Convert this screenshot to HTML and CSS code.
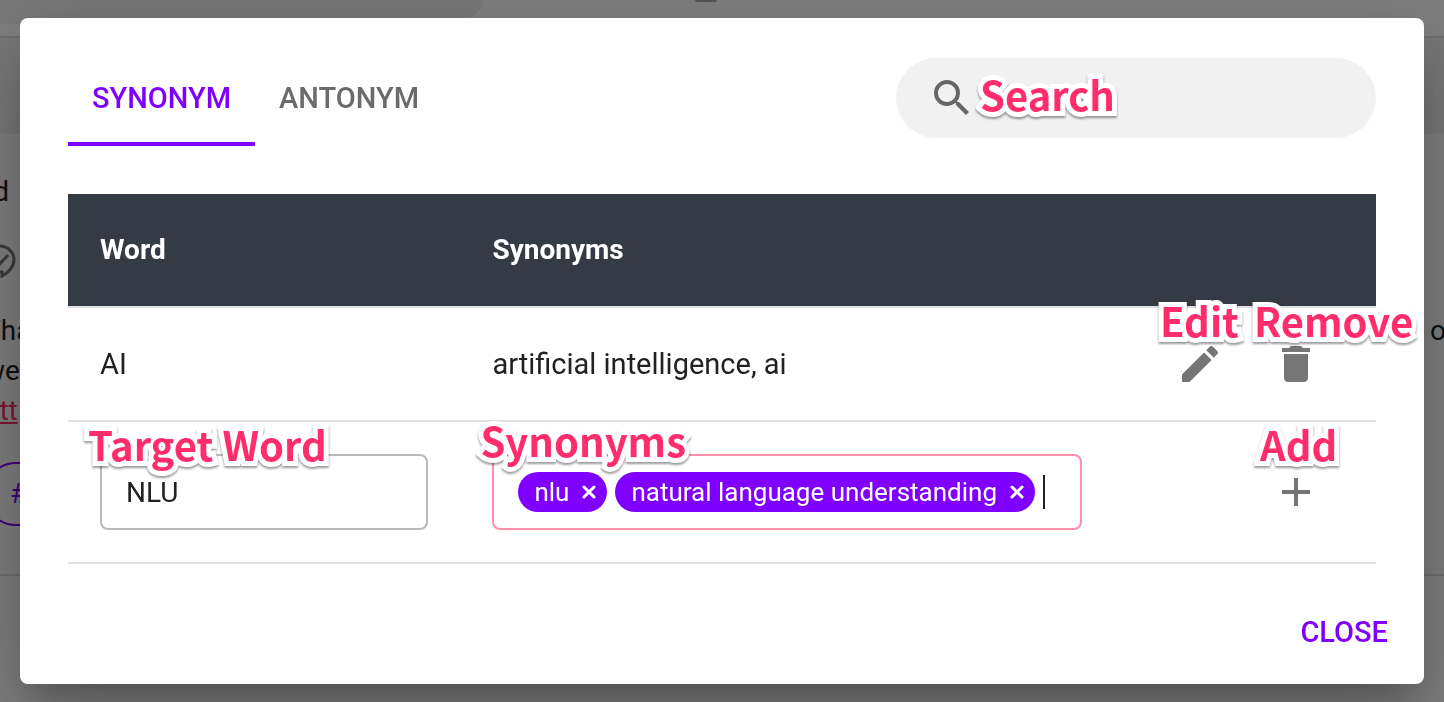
FILE: index.html
```
<!DOCTYPE html>
<html lang="en">
<head>
    <meta charset="UTF-8">
    <meta name="viewport" content="width=device-width, initial-scale=1.0">
    <title>Synonyms</title>
    <link rel="stylesheet" href="styles.css">
</head>
<body>
    <!-- Page behind the dialog -->
    <div class="page" aria-hidden="true">
        <div class="toolbar">
            <div class="toolbar-search"></div>
            <div class="toolbar-icon"></div>
        </div>
        <div class="page-band"></div>
        <div class="page-row">
            <div class="page-title">rd</div>
            <svg class="page-icon" viewBox="0 0 32 34" fill="none" stroke="#777" stroke-width="3">
                <path d="M16 2a14 14 0 0 1 14 14c0 7-6 13-12 16v-4h-2A13 13 0 0 1 16 2z"/>
                <path d="M9 17l5 5 10-11"/>
            </svg>
            <div class="page-text">
                <div>Tha</div>
                <div>o</div>
            </div>
            <div>we</div>
            <a class="page-link" href="#">htt</a>
            <div class="page-chip">#</div>
        </div>
    </div>

    <div class="backdrop">
        <div class="dialog" role="dialog" aria-label="Synonyms">
            <div class="dialog-header">
                <div class="tabs" role="tablist">
                    <button class="tab active" role="tab" aria-selected="true">SYNONYM</button>
                    <button class="tab" role="tab" aria-selected="false">ANTONYM</button>
                </div>
                <div class="search">
                    <svg class="icon search-icon" viewBox="0 0 24 24"><path d="M15.5 14h-.79l-.28-.27A6.47 6.47 0 0 0 16 9.5 6.5 6.5 0 1 0 9.5 16c1.61 0 3.09-.59 4.23-1.57l.27.28v.79l5 4.99L20.49 19l-4.99-5zm-6 0C7.01 14 5 11.99 5 9.5S7.01 5 9.5 5 14 7.01 14 9.5 11.99 14 9.5 14z"/></svg>
                    <input type="text" aria-label="Search">
                    <span class="note note-search">Search</span>
                </div>
            </div>

            <table>
                <thead>
                    <tr>
                        <th class="col-word">Word</th>
                        <th class="col-synonyms">Synonyms</th>
                        <th class="col-actions"></th>
                    </tr>
                </thead>
                <tbody>
                    <tr class="row-word">
                        <td>AI</td>
                        <td>artificial intelligence, ai</td>
                        <td>
                            <div class="actions">
                                <button class="icon-button" aria-label="Edit">
                                    <svg class="icon" viewBox="0 0 24 24"><path d="M3 17.25V21h3.75L17.81 9.94l-3.75-3.75L3 17.25zM20.71 7.04a1 1 0 0 0 0-1.41l-2.34-2.34a1 1 0 0 0-1.41 0l-1.83 1.83 3.75 3.75 1.83-1.83z"/></svg>
                                    <span class="note note-edit">Edit</span>
                                </button>
                                <button class="icon-button" aria-label="Remove">
                                    <svg class="icon" viewBox="0 0 24 24"><path d="M6 19c0 1.1.9 2 2 2h8c1.1 0 2-.9 2-2V7H6v12zM19 4h-3.5l-1-1h-5l-1 1H5v2h14V4z"/></svg>
                                    <span class="note note-remove">Remove</span>
                                </button>
                            </div>
                        </td>
                    </tr>
                    <tr class="row-new">
                        <td>
                            <div class="field">
                                <input class="word-input" type="text" value="NLU" aria-label="Target Word">
                                <span class="note note-word">Target Word</span>
                            </div>
                        </td>
                        <td>
                            <div class="field tags">
                                <span class="tag">nlu
                                    <button class="tag-remove" aria-label="Remove nlu"><svg viewBox="0 0 14 14"><path d="M2 2l10 10M12 2L2 12"/></svg></button>
                                </span>
                                <span class="tag">natural language understanding
                                    <button class="tag-remove" aria-label="Remove natural language understanding"><svg viewBox="0 0 14 14"><path d="M2 2l10 10M12 2L2 12"/></svg></button>
                                </span>
                                <input class="tag-input" type="text" aria-label="Synonyms">
                                <span class="note note-synonyms">Synonyms</span>
                            </div>
                        </td>
                        <td>
                            <div class="actions">
                                <button class="icon-button" aria-label="Add">
                                    <svg class="icon" viewBox="0 0 24 24"><path d="M19 13h-6v6h-2v-6H5v-2h6V5h2v6h6v2z"/></svg>
                                    <span class="note note-add">Add</span>
                                </button>
                            </div>
                        </td>
                    </tr>
                </tbody>
            </table>

            <div class="dialog-footer">
                <button class="close-button">CLOSE</button>
            </div>
        </div>
    </div>
</body>
</html>
```
FILE: styles.css
```
* {
    box-sizing: border-box;
}
body {
    margin: 0;
    font-family: Roboto, sans-serif;
    font-size: 28px;
    line-height: 40px;
    color: #212121;
    background: white;
}
button,
input {
    font: inherit;
    color: inherit;
    background: none;
    border: none;
    padding: 0;
    margin: 0;
    outline: none;
}
button {
    cursor: pointer;
}

/* page behind */
.page {
    height: 100vh;
    overflow: hidden;
}
.toolbar {
    display: flex;
    align-items: flex-start;
    gap: 212px;
    height: 38px;
    border-bottom: 2px solid #ddd;
}
.toolbar-search {
    width: 483px;
    height: 24px;
    background: #f1f1f1;
    border-bottom-right-radius: 40px 24px;
}
.toolbar-icon {
    width: 22px;
    height: 2px;
    background: #aaa;
    border-radius: 0 0 2px 2px;
}
.page-band {
    height: 96px;
    background: #f1f1f1;
}
.page-row {
    display: flex;
    flex-direction: column;
    align-items: flex-start;
    height: 442px;
    padding-top: 38px;
    margin-left: -16px;
    border-bottom: 2px solid #ddd;
}
.page-icon {
    width: 32px;
    height: 34px;
    margin: 32px 0 33px;
}
.page-text {
    display: flex;
    justify-content: space-between;
    align-self: stretch;
    margin-right: -2px;
}
.page-link {
    color: #ff2d6b;
}
.page-chip {
    width: 120px;
    height: 64px;
    margin-top: 31px;
    padding: 10px 24px;
    color: #7f00ff;
    border: 2px solid #7f00ff;
    border-radius: 32px;
}

/* dialog */
.backdrop {
    position: fixed;
    inset: 0;
    display: flex;
    align-items: flex-start;
    padding: 18px 20px;
    background: rgba(0,0,0,0.5);
}
.dialog {
    flex: 1;
    padding: 32px 0 16px;
    background: white;
    border-radius: 8px;
    box-shadow: 0 22px 30px -14px rgba(0,0,0,0.2), 0 48px 76px 6px rgba(0,0,0,0.14), 0 18px 92px 16px rgba(0,0,0,0.12);
}
.dialog-header {
    display: flex;
    justify-content: space-between;
    align-items: center;
    margin: 0 48px 48px;
}
.tabs {
    display: flex;
}
.tab {
    height: 96px;
    padding: 0 24px;
    font-size: 29px;
    font-weight: 500;
    color: #6b6b6b;
    border-top: 4px solid transparent;
    border-bottom: 4px solid transparent;
}
.tab.active {
    color: #7f00ff;
    border-bottom-color: #7f00ff;
}
.search {
    position: relative;
    display: flex;
    align-items: center;
    width: 480px;
    height: 80px;
    padding: 0 32px;
    background: #f1f1f1;
    border-radius: 40px;
}
.search input {
    flex: 1;
    min-width: 0;
}
.icon {
    display: block;
    width: 48px;
    height: 48px;
    fill: #757575;
}
.search-icon {
    fill: #666;
}

/* table */
table {
    width: calc(100% - 96px);
    margin: 0 48px 32px;
    table-layout: fixed;
    border-collapse: separate;
    border-spacing: 0;
}
th,
td {
    padding: 0 32px;
    text-align: left;
    border-bottom: 2px solid #e0e0e0;
}
th {
    height: 114px;
    font-weight: 700;
    color: white;
    background: #353b44;
    background-clip: padding-box;
}
.col-word {
    width: 30%;
}
.col-synonyms {
    width: 50%;
}
.row-word td {
    height: 114px;
    font-size: 29px;
}
.row-new td {
    height: 142px;
}
.actions {
    display: flex;
    justify-content: flex-end;
}
.icon-button {
    position: relative;
    display: flex;
    align-items: center;
    justify-content: center;
    width: 96px;
    height: 96px;
}
.field {
    position: relative;
}
.word-input {
    display: block;
    width: 100%;
    height: 76px;
    padding: 0 24px;
    border: 2px solid #b9b9b9;
    border-radius: 8px;
}
.tags {
    display: flex;
    align-items: center;
    gap: 8px;
    height: 76px;
    padding: 0 24px;
    border: 2px solid #ff8fab;
    border-radius: 8px;
}
.tag {
    display: flex;
    align-items: center;
    gap: 13px;
    height: 40px;
    padding: 0 11px 0 16px;
    font-size: 26px;
    color: white;
    white-space: nowrap;
    background: #7f00ff;
    border-radius: 20px;
}
.tag-remove svg {
    display: block;
    width: 14px;
    height: 14px;
    fill: none;
    stroke: white;
    stroke-width: 3;
    stroke-linecap: round;
}
.tag-input {
    flex: 1;
    min-width: 0;
    height: 34px;
    border-left: 2px solid #212121;
}

.dialog-footer {
    display: flex;
    justify-content: flex-end;
    padding: 0 20px;
}
.close-button {
    height: 72px;
    padding: 0 16px;
    font-size: 29px;
    font-weight: 500;
    color: #7f00ff;
}

/* pink callouts */
.note {
    position: absolute;
    font-family: "Noto Sans CJK KR", "Noto Sans", sans-serif;
    font-size: 40px;
    font-weight: 700;
    line-height: 48px;
    color: #ff2d6b;
    white-space: nowrap;
    -webkit-text-stroke: 10px white;
    stroke-linejoin: round;
    paint-order: stroke fill;
    filter: drop-shadow(0 2px 1px rgba(0,0,0,0.4));
    pointer-events: none;
}
.note-search {
    left: 84px;
    top: 12px;
}
.note-edit {
    left: 8px;
    top: -20px;
}
.note-remove {
    left: 6px;
    top: -20px;
}
.note-add {
    left: 12px;
    top: -24px;
}
.note-word {
    left: -12px;
    top: -34px;
}
.note-synonyms {
    left: -14px;
    top: -40px;
}
```
